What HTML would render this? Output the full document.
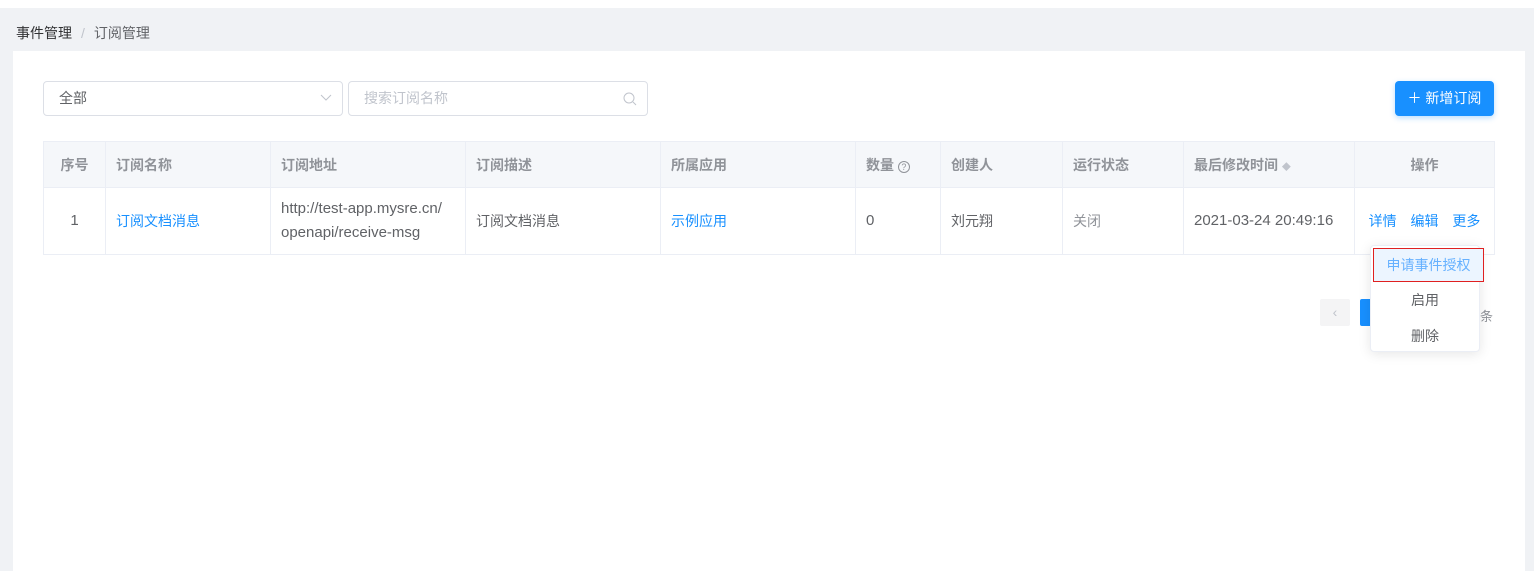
<!DOCTYPE html>
<html><head><meta charset="utf-8"><style>
*{box-sizing:border-box;margin:0;padding:0}
body{width:1534px;height:571px;overflow:hidden;background:#fff;font-family:"Liberation Sans","Noto Sans CJK SC",sans-serif;font-size:14px;color:#606266;position:relative}
.bg{position:absolute;left:0;top:8px;width:1534px;height:563px;background:#f0f2f5}
.bc{position:absolute;left:16px;top:23px;font-size:14px;color:#606266}
.bc b{font-weight:normal;color:#303133}
.bc i{font-style:normal;color:#c0c4cc;margin:0 9px}
.card{position:absolute;left:13px;top:51px;width:1512px;height:520px;background:#fff}
.inp{position:absolute;top:81px;height:35px;border:1px solid #dcdfe6;border-radius:4px;padding:0 15px;line-height:33px}
.btn{position:absolute;left:1395px;top:81px;width:99px;height:35px;background:#1890ff;border-radius:4px;color:#fff;line-height:35px;text-align:center;box-shadow:0 2px 6px rgba(24,144,255,.3)}
table{position:absolute;left:43px;top:141px;border-collapse:collapse;width:1452px;table-layout:fixed}
td,th{border:1px solid #ebeef5;padding:0 10px;text-align:left;font-weight:normal}
th{background:#f5f7fa;height:46px;color:#909399;font-weight:bold}
td{height:67px;line-height:24px;font-size:15px}
.blue{color:#1890ff}
.dd{position:absolute;left:1370px;top:245px;width:110px;height:107px;background:#fff;border:1px solid #ebeef5;border-radius:4px;box-shadow:0 2px 12px rgba(0,0,0,.1)}
.dd div{height:36px;line-height:36px;text-align:center}
</style></head><body>
<div class="bg"></div>
<div class="bc"><b>事件管理</b><i>/</i>订阅管理</div>
<div class="card"></div>
<div class="inp" style="left:43px;width:300px">全部<svg style="position:absolute;right:10px;top:12px" width="12" height="8"><path d="M1 1l5 5 5-5" stroke="#c0c4cc" fill="none"/></svg></div>
<div class="inp" style="left:348px;width:300px;color:#c0c4cc">搜索订阅名称<svg style="position:absolute;right:10px;top:10px" width="14" height="14"><circle cx="6" cy="6" r="5" stroke="#c0c4cc" fill="none"/><path d="M10 10l3 3" stroke="#c0c4cc"/></svg></div>
<div class="btn">＋ 新增订阅</div>
<table>
<colgroup><col style="width:62px"><col style="width:165px"><col style="width:195px"><col style="width:195px"><col style="width:195px"><col style="width:85px"><col style="width:122px"><col style="width:121px"><col style="width:171px"><col style="width:140px"></colgroup>
<tr><th style="text-align:center">序号</th><th>订阅名称</th><th>订阅地址</th><th>订阅描述</th><th>所属应用</th><th>数量 <span style="display:inline-block;width:12px;height:12px;border:1px solid #909399;border-radius:50%;font-size:9px;line-height:10px;text-align:center;font-weight:normal">?</span></th><th>创建人</th><th>运行状态</th><th>最后修改时间 <span style="font-size:9px;color:#c0c4cc">◆</span></th><th style="text-align:center">操作</th></tr>
<tr><td style="text-align:center">1</td><td class="blue" style="font-size:14px">订阅文档消息</td><td>http://test-app.mysre.cn/<br>openapi/receive-msg</td><td style="font-size:14px">订阅文档消息</td><td class="blue" style="font-size:14px">示例应用</td><td>0</td><td style="font-size:14px">刘元翔</td><td style="color:#909399;font-size:14px">关闭</td><td>2021-03-24 20:49:16</td><td class="blue" style="text-align:center;word-spacing:10px;font-size:14px">详情 编辑 更多</td></tr>
</table>
<div style="position:absolute;left:1320px;top:299px;width:30px;height:27px;background:#f4f4f5;border-radius:2px;color:#c0c4cc;text-align:center;line-height:27px">‹</div>
<div style="position:absolute;left:1360px;top:299px;width:20px;height:27px;background:#1890ff;border-radius:2px"></div>
<div style="position:absolute;left:1480px;top:306px;color:#909399;font-size:13px">条</div>
<div class="dd">
<div style="background:#ecf5ff;color:#66b1ff;border:1px solid #e02020;margin:2px -5px 0 2px;height:34px;line-height:32px">申请事件授权</div>
<div>启用</div><div>删除</div>
</div>
</body></html>
